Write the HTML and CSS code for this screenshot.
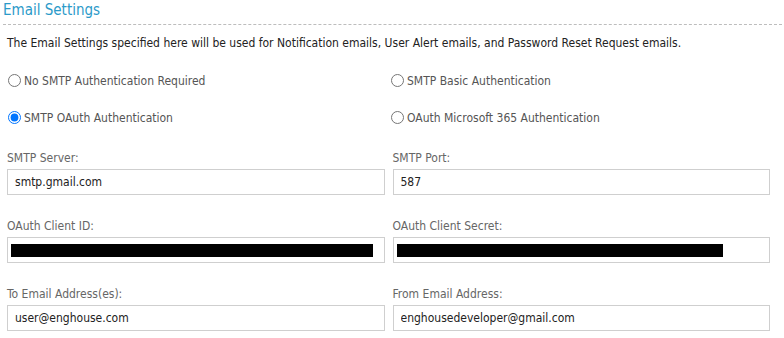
FILE: index.html
```html
<!DOCTYPE html>
<html lang="en">
<head>
    <meta charset="UTF-8">
    <title>Email Settings</title>
    <link rel="stylesheet" href="styles.css">
</head>
<body>
    <div class="settings">
        <h2 class="section-title">Email Settings</h2>

        <p class="intro">The Email Settings specified here will be used for Notification emails, User Alert emails, and Password Reset Request emails.</p>

        <div class="auth-options">
            <label class="radio-option"><input type="radio" name="auth"> No SMTP Authentication Required</label>
            <label class="radio-option"><input type="radio" name="auth"> SMTP Basic Authentication</label>
            <label class="radio-option"><input type="radio" name="auth" checked> SMTP OAuth Authentication</label>
            <label class="radio-option"><input type="radio" name="auth"> OAuth Microsoft 365 Authentication</label>
        </div>

        <div class="fields">
            <div class="field">
                <label class="field-label">SMTP Server:</label>
                <input class="field-input" type="text" value="smtp.gmail.com">
            </div>
            <div class="field">
                <label class="field-label">SMTP Port:</label>
                <input class="field-input" type="text" value="587">
            </div>
            <div class="field">
                <label class="field-label">OAuth Client ID:</label>
                <div class="field-input"><span class="redacted redacted-id"></span></div>
            </div>
            <div class="field">
                <label class="field-label">OAuth Client Secret:</label>
                <div class="field-input"><span class="redacted redacted-secret"></span></div>
            </div>
            <div class="field">
                <label class="field-label">To Email Address(es):</label>
                <input class="field-input" type="text" value="user@enghouse.com">
            </div>
            <div class="field">
                <label class="field-label">From Email Address:</label>
                <input class="field-input" type="text" value="enghousedeveloper@gmail.com">
            </div>
        </div>
    </div>
</body>
</html>
```

FILE: styles.css
```css
:root {
    --title-blue: #2b9ac9;
    --text-dark: #333333;
    --text-muted: #666666;
    --border: #cfcfcf;
}
* {
    margin: 0;
    padding: 0;
    box-sizing: border-box;
}
body {
    font-family: 'DejaVu Sans Condensed', 'DejaVu Sans', sans-serif;
    font-size: 12px;
    color: var(--text-dark);
    background: #ffffff;
}
.settings {
    padding: 0 14px 0 7px;
}
.section-title {
    font-size: 15px;
    font-weight: normal;
    color: var(--title-blue);
    margin-left: -4px;
    margin-right: -12px;
    padding: 1px 0 5px 0;
    border-bottom: 1px dashed #bdbdbd;
}
.intro {
    margin-top: 11px;
    color: #222222;
}
.auth-options {
    display: grid;
    grid-template-columns: 1fr 1fr;
    column-gap: 3px;
    row-gap: 22px;
    margin-top: 23px;
}
.radio-option {
    display: flex;
    align-items: center;
    gap: 3px;
    color: #555555;
    height: 15px;
}
.radio-option input {
    margin: 0 0 0 1px;
    width: 13px;
    height: 13px;
}
.fields {
    display: grid;
    grid-template-columns: 1fr 1fr;
    column-gap: 8px;
    row-gap: 24px;
    margin-top: 26px;
}
.field {
    display: flex;
    flex-direction: column;
    gap: 4px;
}
.field-label {
    color: var(--text-muted);
}
.field-input {
    height: 26px;
    border: 1px solid var(--border);
    padding: 0 7px;
    font: inherit;
    color: #222222;
    display: flex;
    align-items: center;
    outline: none;
}
.redacted {
    display: block;
    height: 13px;
    background: #000000;
    margin-left: -4px;
}
.redacted-id {
    width: 362px;
}
.redacted-secret {
    width: 326px;
}
```
